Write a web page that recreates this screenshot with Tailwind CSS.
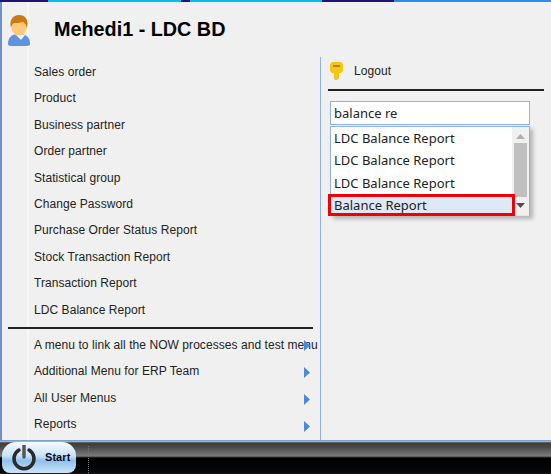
<!DOCTYPE html>
<html lang="en">
<head>
    <meta charset="UTF-8">
    <title>Mehedi1 - LDC BD</title>
    <script src="https://cdn.jsdelivr.net/npm/@tailwindcss/browser@4"></script>
</head>
<body class="w-[551px] h-[474px] overflow-hidden bg-[#f0f0f0] font-['Liberation_Sans',Arial,sans-serif] text-[12px] tracking-[0.06px] text-[#222]">
    <!-- Top strip -->
    <div class="h-[2px] flex">
        <div class="w-[48px] bg-[#1f1470]"></div>
        <div class="w-[133px] bg-[#00bfe8]"></div>
        <div class="w-[9px] bg-[#1f1470]"></div>
        <div class="w-[132px] bg-[#00bfe8]"></div>
        <div class="w-[72px] bg-[#1f1470]"></div>
        <div class="flex-1 bg-[#2a8cf0]"></div>
    </div>

    <!-- Window -->
    <div class="h-[439px] flex flex-col border-l-2 border-[#6f8fc8] border-b border-b-[#7f9fcf]">
        <header class="h-[55px] flex shrink-0">
            <div class="w-[25px] shrink-0 pt-[13px] border-r-2 border-[#f8f8f8] box-content">
                <svg class="ml-[5px]" width="24" height="31" viewBox="0 0 24 31">
                    <path d="M1 29c0-7 4-10 11-10s11 3 11 10c0 1-1 2-3 2H4c-2 0-3-1-3-2z" fill="#5f93e0"/>
                    <path d="M8 19l6 6 4-5z" fill="#f2f6fc"/>
                    <ellipse cx="12" cy="11" rx="8" ry="9.500" fill="#ffcb7a"/>
                    <path d="M4 13C2 5 6 0 12 0c6 0 10 4 8 13-1-3-2-5-4-6-3 1-8 1-9 1-2 1-3 3-3 5z" fill="#c97a12"/>
                </svg>
            </div>
            <h1 class="ml-[25px] mt-[16px] text-[19.800px] leading-[22px] tracking-normal font-bold text-black">Mehedi1 - LDC BD</h1>
        </header>

        <div class="flex-1 flex">
            <!-- Left menu -->
            <div class="w-[319px] shrink-0 flex border-r border-[#8fb4e4] relative">
                <div class="w-[25px] shrink-0 border-r-2 border-[#f8f8f8] box-content"></div>
                <nav class="flex-1 pl-[5px]">
                    <ul class="flex flex-col mt-[2px]">
                        <li class="h-[26.400px] leading-[26px]">Sales order</li>
                        <li class="h-[26.400px] leading-[26px]">Product</li>
                        <li class="h-[26.400px] leading-[26px]">Business partner</li>
                        <li class="h-[26.400px] leading-[26px]">Order partner</li>
                        <li class="h-[26.400px] leading-[26px]">Statistical group</li>
                        <li class="h-[26.400px] leading-[26px]">Change Password</li>
                        <li class="h-[26.400px] leading-[26px]">Purchase Order Status Report</li>
                        <li class="h-[26.400px] leading-[26px]">Stock Transaction Report</li>
                        <li class="h-[26.400px] leading-[26px]">Transaction Report</li>
                        <li class="h-[26.400px] leading-[26px]">LDC Balance Report</li>
                    </ul>
                    <ul class="flex flex-col mt-[9px]">
                        <li class="relative h-[26.400px] leading-[26px] whitespace-nowrap">A menu to link all the NOW processes and test menu<svg class="absolute left-[270px] top-[8px]" width="6" height="11" viewBox="0 0 6 11"><path d="M0 0l6 5.500-6 5.500z" fill="#4a8ad8"/></svg></li>
                        <li class="relative h-[26.400px] leading-[26px]">Additional Menu for ERP Team<svg class="absolute left-[270px] top-[9px]" width="6" height="11" viewBox="0 0 6 11"><path d="M0 0l6 5.500-6 5.500z" fill="#4a8ad8"/></svg></li>
                        <li class="relative h-[26.400px] leading-[26px]">All User Menus<svg class="absolute left-[270px] top-[9px]" width="6" height="11" viewBox="0 0 6 11"><path d="M0 0l6 5.500-6 5.500z" fill="#4a8ad8"/></svg></li>
                        <li class="relative h-[26.400px] leading-[26px]">Reports<svg class="absolute left-[270px] top-[10px]" width="6" height="11" viewBox="0 0 6 11"><path d="M0 0l6 5.500-6 5.500z" fill="#4a8ad8"/></svg></li>
                    </ul>
                </nav>
                <!-- Separator crosses the icon gutter -->
                <div class="absolute left-[6px] top-[270px] w-[305px] h-[2px] bg-[#222]"></div>
            </div>

            <!-- Right panel -->
            <section class="flex-1 pl-[7px] pr-[7px]">
                <div class="h-[28px] pb-[4px] flex items-center border-b-[2px] border-[#222] box-content">
                    <svg class="ml-[2px]" width="13" height="18" viewBox="0 0 13 18">
                        <path d="M2 0h9l2 2v7l-2 2H9v5l-2 2H5l-1-2v-5H2L0 9V2z" fill="#f5c518"/>
                        <path d="M3 3h7v2H3z" fill="#b08808"/>
                    </svg>
                    <span class="ml-[11px]">Logout</span>
                </div>
                <div class="ml-[2px] mt-[10px] w-[200px] h-[24px] bg-white border border-[#8fb4e4] pl-[3px] leading-[22px] text-[13px] tracking-normal font-['Noto_Sans',sans-serif] text-[#222]">balance re</div>
                <!-- Suggestion dropdown -->
                <div class="relative ml-[2px] mt-[1px] w-[200px] h-[90px] bg-white border border-[#8fb4e4] shadow-[3px_3px_4px_rgba(0,0,0,0.25)] font-['Noto_Sans',sans-serif] text-[13px] tracking-normal">
                    <ul>
                        <li class="h-[22.300px] leading-[22px] pl-[3px]">LDC Balance Report</li>
                        <li class="h-[22.300px] leading-[22px] pl-[3px]">LDC Balance Report</li>
                        <li class="h-[22.300px] leading-[22px] pl-[3px]">LDC Balance Report</li>
                        <li class="h-[22.300px] leading-[22px] pl-[3px] bg-[#dfe8f6]">Balance Report</li>
                    </ul>
                    <div class="absolute right-0 top-0 bottom-0 w-[17px] bg-[#f0f0f0] flex flex-col items-center">
                        <svg class="mt-[7px]" width="9" height="5" viewBox="0 0 9 5"><path d="M4.500 0L9 5H0z" fill="#b0b0b0"/></svg>
                        <div class="mt-[4px] w-[13px] h-[54px] bg-[#c0c0c0]"></div>
                        <svg class="mt-[6px]" width="9" height="5" viewBox="0 0 9 5"><path d="M0 0h9L4.500 5z" fill="#505050"/></svg>
                    </div>
                    <!-- Red annotation -->
                    <div class="absolute left-[-3px] top-[67px] w-[187px] h-[22px] border-[3px] border-[#f00000]"></div>
                </div>
            </section>
        </div>
    </div>

    <!-- Taskbar -->
    <footer class="h-[33px] flex items-stretch bg-[linear-gradient(#d8d8d8_0,#3a3a3a_2px,#484848_6px,#7c7c7c_15px,#000_17px,#05090c_32px,#4a1a1a_33px)]">
        <button class="ml-[2px] mt-[1px] w-[74px] h-[31px] rounded-t-[14px] rounded-b-[8px] bg-[linear-gradient(#f4faff,#c8e2f8_45%,#8fc0ec_60%,#cbe4f8)] flex items-center">
            <svg class="ml-[9px]" width="26" height="26" viewBox="0 0 26 26">
                <path d="M8 5a10 10 0 1 0 10 0" fill="none" stroke="#2a2a2a" stroke-width="3.500" stroke-linecap="round"/>
                <path d="M13 1v11" stroke="#555" stroke-width="3.500" stroke-linecap="round"/>
            </svg>
            <span class="ml-[8px] font-bold text-[11px] text-[#0a0a1a]">Start</span>
        </button>
        <div class="ml-[12px] mt-[5px] mb-[1px] border-l border-dotted border-[#777]"></div>
    </footer>
</body>
</html>
